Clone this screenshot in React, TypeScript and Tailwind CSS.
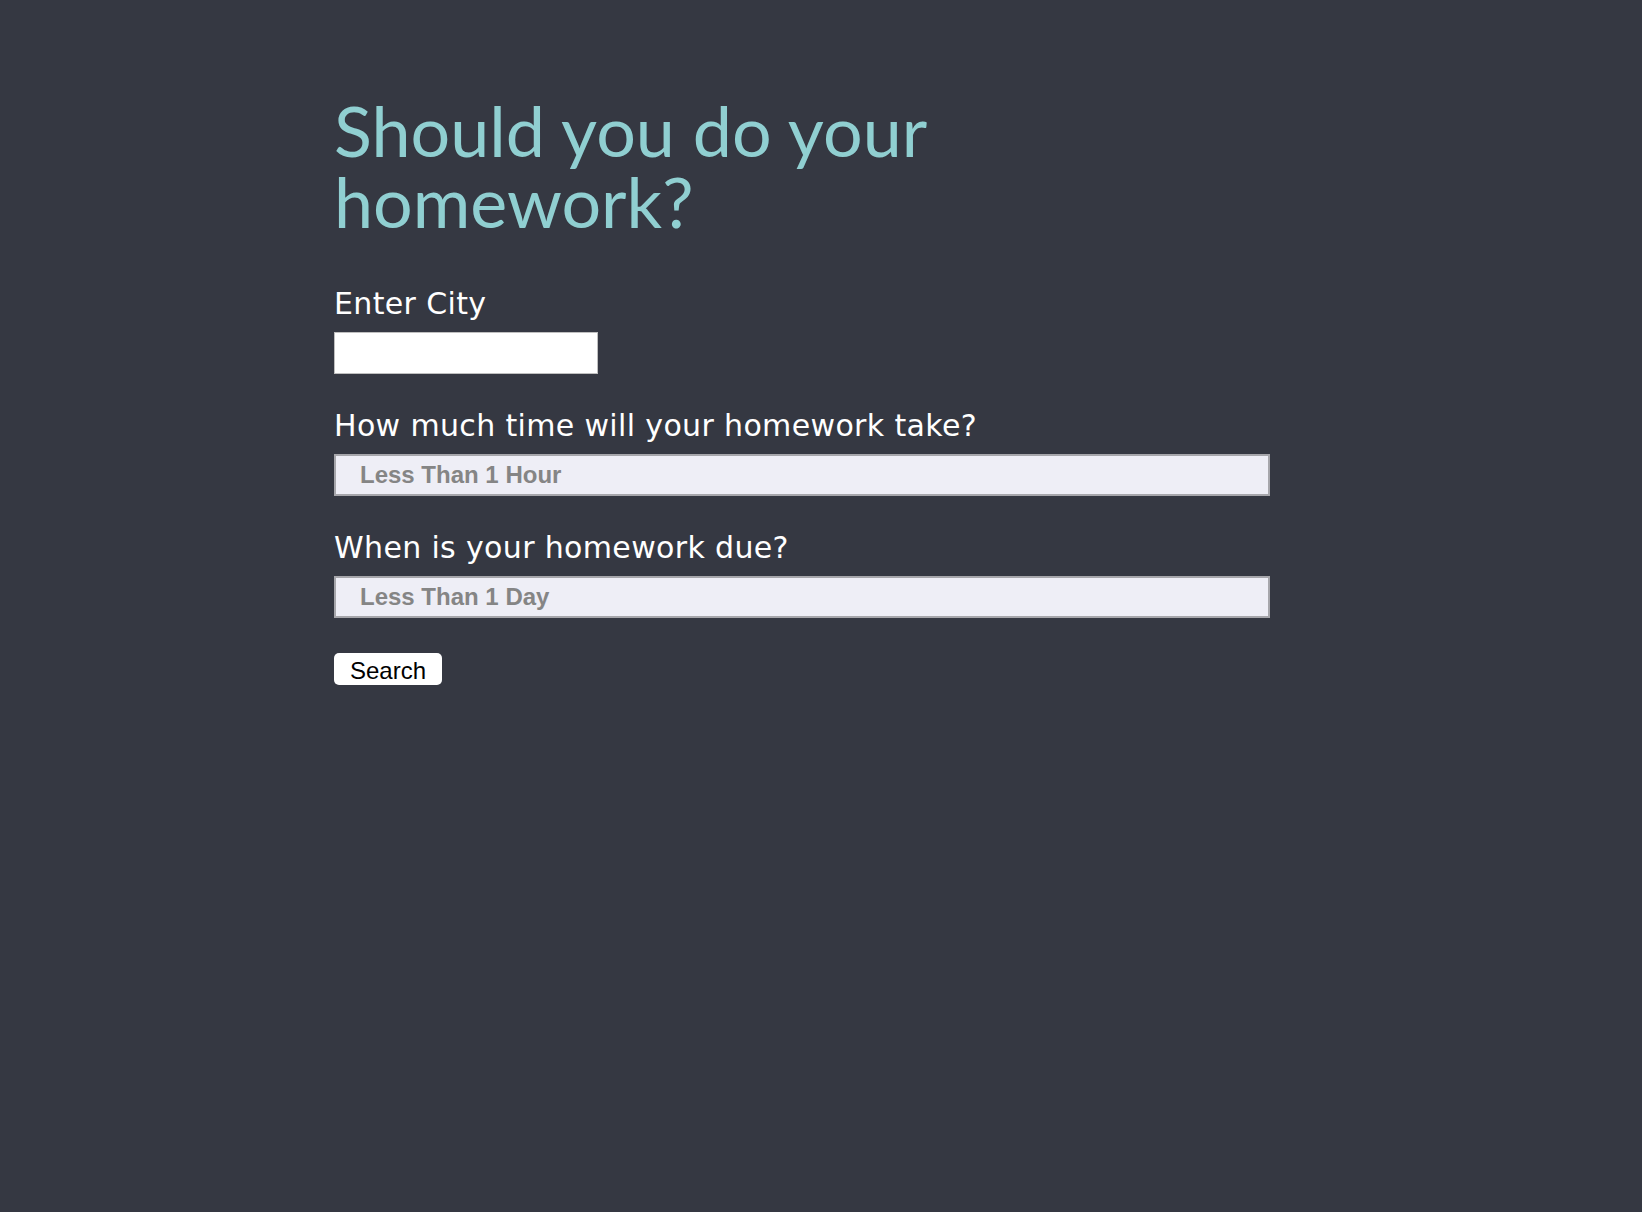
import React from 'react';

// Homework-or-not form: title, city input, two selects and a search button.

const titleFont = { fontFamily: 'Lato, "Open Sans", sans-serif' };
const labelFont = { fontFamily: '"DejaVu Sans", Lato, sans-serif' };
const arial = { fontFamily: '"Liberation Sans", Arial, sans-serif' };

const TIME_OPTIONS = ['Less Than 1 Hour', '1 - 2 Hours', '2 - 4 Hours', 'More Than 4 Hours'];
const DUE_OPTIONS = ['Less Than 1 Day', '1 - 2 Days', '3 - 5 Days', 'More Than 5 Days'];

function Label({ children }: { children: React.ReactNode }) {
  return (
    <label
      className="block text-[30px] leading-[36px] tracking-[0.35px] text-white"
      style={labelFont}
    >
      {children}
    </label>
  );
}

function Select({ options }: { options: string[] }) {
  return (
    <select
      className="mt-[10px] block h-[42px] w-[936px] appearance-none rounded-none border-2 border-[#a6a6ab] bg-[#eeeef6] pl-[24px] text-[24px] font-bold text-[#858585] outline-none"
      style={arial}
      defaultValue={options[0]}
    >
      {options.map((o) => (
        <option key={o}>{o}</option>
      ))}
    </select>
  );
}

export default function App() {
  return (
    <div className="min-h-screen w-full bg-[#353842] pl-[334px] pt-[95px]">
      <h1
        className="w-[640px] text-[70px] leading-[71px] text-[#90cfd1]"
        style={titleFont}
      >
        Should you do your homework?
      </h1>

      <div className="mt-[49px]">
        <Label>Enter City</Label>
        <input
          type="text"
          className="mt-[10px] block h-[42px] w-[264px] border border-[#bfbfbf] bg-white outline-none"
        />
      </div>

      <div className="mt-[34px]">
        <Label>How much time will your homework take?</Label>
        <Select options={TIME_OPTIONS} />
      </div>

      <div className="mt-[34px]">
        <Label>When is your homework due?</Label>
        <Select options={DUE_OPTIONS} />
      </div>

      <button
        type="button"
        className="mt-[35px] block h-[32px] w-[108px] rounded-[5px] bg-white pt-[3px] text-[24px] leading-[29px] text-black"
        style={arial}
      >
        Search
      </button>
    </div>
  );
}
